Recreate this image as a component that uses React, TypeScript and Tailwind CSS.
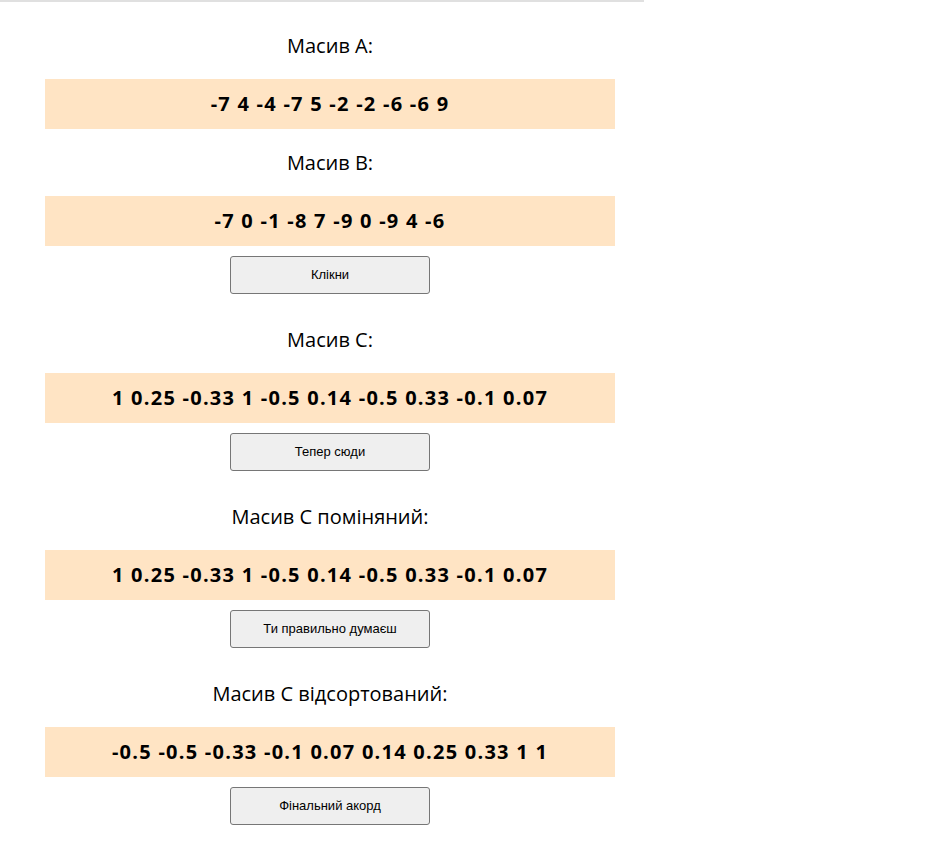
const sections = [
  { title: "Масив А:", values: "-7 4 -4 -7 5 -2 -2 -6 -6 9" },
  { title: "Масив В:", values: "-7 0 -1 -8 7 -9 0 -9 4 -6", button: "Клікни" },
  { title: "Масив С:", values: "1 0.25 -0.33 1 -0.5 0.14 -0.5 0.33 -0.1 0.07", button: "Тепер сюди" },
  { title: "Масив С поміняний:", values: "1 0.25 -0.33 1 -0.5 0.14 -0.5 0.33 -0.1 0.07", button: "Ти правильно думаєш" },
  { title: "Масив С відсортований:", values: "-0.5 -0.5 -0.33 -0.1 0.07 0.14 0.25 0.33 1 1", button: "Фінальний акорд" },
];

const App = () => {
  return (
    <div className="min-h-screen bg-white text-black" style={{ fontFamily: '"Open Sans", sans-serif' }}>
      <div className="w-[644px] border-t-2 border-[#e0e0e0] pt-[32px]">
        <div className="w-[660px] flex flex-col">
          {sections.map((s, i) => (
            <div key={i} className="flex flex-col items-center">
              <h2 className={`text-[20px] leading-[24px] mb-[21px] ${i === 0 ? "" : "mt-[22px]"}`}>{s.title}</h2>
              <div className="w-[570px] h-[50px] bg-[#ffe4c4] flex items-center justify-center text-[20px] font-bold tracking-[1.25px]">
                {s.values}
              </div>
              {s.button && (
                <button
                  className="mt-[10px] mb-[12px] w-[200px] h-[38px] bg-[#efefef] border border-[#767676] rounded-[3px] text-[13px]"
                  style={{ fontFamily: '"Liberation Sans", Arial, sans-serif' }}
                >
                  {s.button}
                </button>
              )}
            </div>
          ))}
        </div>
      </div>
    </div>
  );
};

export default App;
